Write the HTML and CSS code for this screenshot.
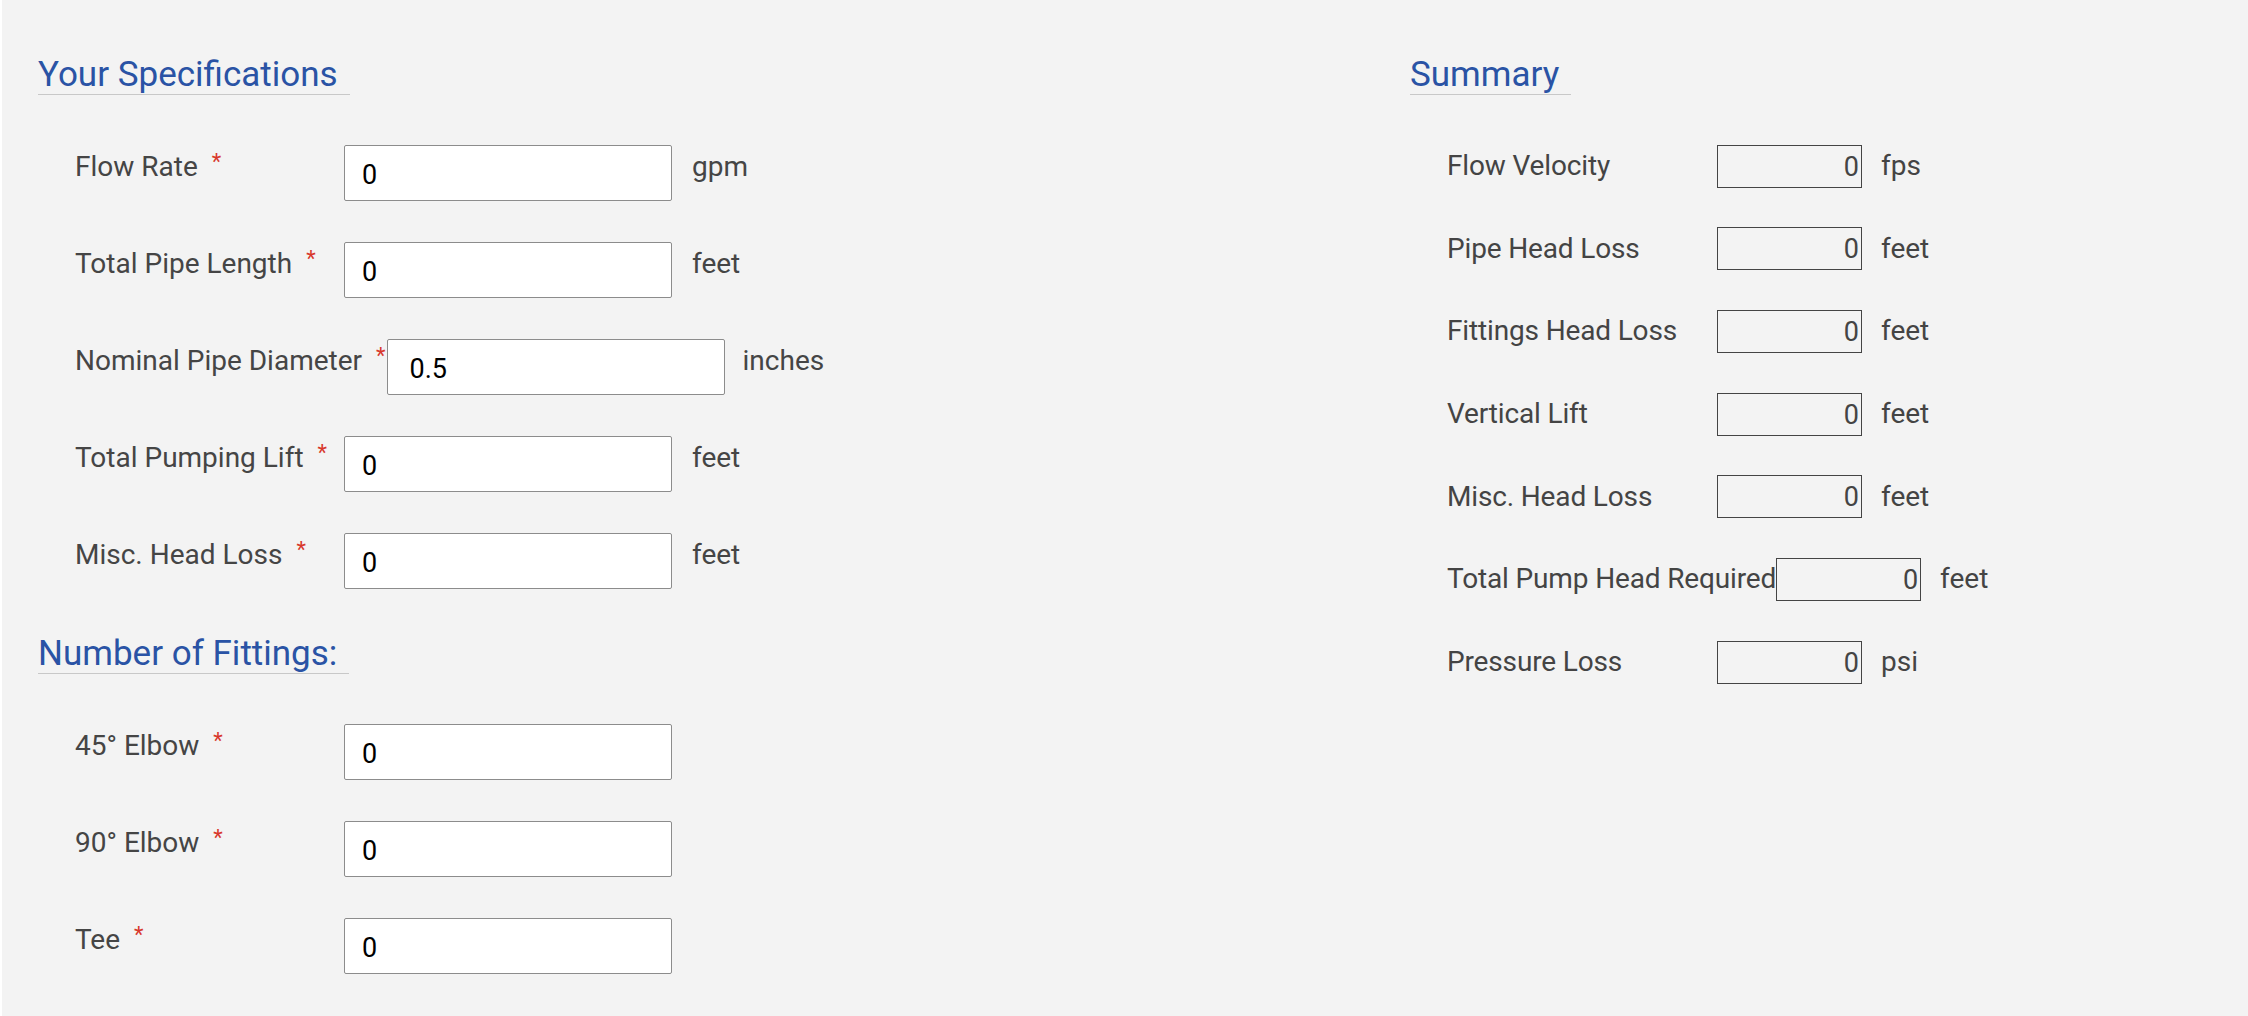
FILE: index.html
```html
<!DOCTYPE html>
<html lang="en">
<head>
<meta charset="utf-8">
<title>Pump Head Calculator</title>
<link rel="stylesheet" href="styles.css">
</head>
<body>
<div class="page">
  <section class="col col-left">
    <h2 class="sec-title">Your Specifications</h2>
    <div class="rows">
      <div class="row">
        <label class="lbl">Flow Rate<span class="req">*</span></label>
        <input class="inp" type="text" value="0">
        <span class="unit">gpm</span>
      </div>
      <div class="row">
        <label class="lbl">Total Pipe Length<span class="req">*</span></label>
        <input class="inp" type="text" value="0">
        <span class="unit">feet</span>
      </div>
      <div class="row">
        <label class="lbl">Nominal Pipe Diameter<span class="req">*</span></label>
        <input class="inp inp--wide" type="text" value="0.5">
        <span class="unit unit--tight">inches</span>
      </div>
      <div class="row">
        <label class="lbl">Total Pumping Lift<span class="req">*</span></label>
        <input class="inp" type="text" value="0">
        <span class="unit">feet</span>
      </div>
      <div class="row">
        <label class="lbl">Misc. Head Loss<span class="req">*</span></label>
        <input class="inp" type="text" value="0">
        <span class="unit">feet</span>
      </div>
    </div>

    <h2 class="sec-title sec-title--next">Number of Fittings:</h2>
    <div class="rows">
      <div class="row">
        <label class="lbl">45° Elbow<span class="req">*</span></label>
        <input class="inp" type="text" value="0">
      </div>
      <div class="row">
        <label class="lbl">90° Elbow<span class="req">*</span></label>
        <input class="inp" type="text" value="0">
      </div>
      <div class="row">
        <label class="lbl">Tee<span class="req">*</span></label>
        <input class="inp" type="text" value="0">
      </div>
    </div>
  </section>

  <section class="col col-right">
    <h2 class="sec-title">Summary</h2>
    <div class="sum-rows">
      <div class="sum-row">
        <span class="sum-lbl">Flow Velocity</span>
        <span class="out">0</span>
        <span class="sum-unit">fps</span>
      </div>
      <div class="sum-row">
        <span class="sum-lbl">Pipe Head Loss</span>
        <span class="out">0</span>
        <span class="sum-unit">feet</span>
      </div>
      <div class="sum-row">
        <span class="sum-lbl">Fittings Head Loss</span>
        <span class="out">0</span>
        <span class="sum-unit">feet</span>
      </div>
      <div class="sum-row">
        <span class="sum-lbl">Vertical Lift</span>
        <span class="out">0</span>
        <span class="sum-unit">feet</span>
      </div>
      <div class="sum-row">
        <span class="sum-lbl">Misc. Head Loss</span>
        <span class="out">0</span>
        <span class="sum-unit">feet</span>
      </div>
      <div class="sum-row">
        <span class="sum-lbl">Total Pump Head Required</span>
        <span class="out">0</span>
        <span class="sum-unit">feet</span>
      </div>
      <div class="sum-row">
        <span class="sum-lbl">Pressure Loss</span>
        <span class="out">0</span>
        <span class="sum-unit">psi</span>
      </div>
    </div>
  </section>
</div>
</body>
</html>
```

FILE: styles.css
```css
* {
  box-sizing: border-box;
}

html, body {
  margin: 0;
  padding: 0;
  background: #ffffff;
}

body {
  font-family: Roboto, "Liberation Sans", Arial, sans-serif;
  color: #444444;
}

.page {
  margin-left: 2px;
  min-height: 1016px;
  background: #f3f3f3;
  padding: 56.5px 0 0 36px;
  display: grid;
  grid-template-columns: 1372px 1fr;
  align-items: start;
}

.col {
  display: flex;
  flex-direction: column;
  align-items: flex-start;
}

.sec-title {
  margin: 0 0 50px 0;
  font-size: 35px;
  line-height: 35px;
  font-weight: 400;
  color: #2a53a5;
  padding: 0 12px 2px 0;
  border-bottom: 1px solid #c8c8c8;
}

.sec-title--next {
  margin-top: 47.5px;
}

.rows {
  display: flex;
  flex-direction: column;
  gap: 41px;
  padding-left: 37px;
}

.row {
  display: flex;
  align-items: flex-start;
}

.lbl {
  min-width: 269px;
  font-size: 28px;
  line-height: 40px;
  padding-top: 2px;
  color: #454545;
  white-space: nowrap;
}

.req {
  color: #d8382c;
  font-size: 22px;
  margin-left: 14px;
  margin-right: 1px;
  vertical-align: top;
  line-height: 30px;
}

.inp {
  width: 328px;
  height: 56px;
  margin: 0;
  padding: 4px 17px 0 17px;
  border: 1px solid #8c8c8c;
  border-radius: 2px;
  background: #ffffff;
  font-family: Roboto, "Liberation Sans", Arial, sans-serif;
  font-size: 27px;
  color: #000000;
  outline: none;
}

.inp--wide {
  width: 338px;
  padding-left: 22px;
}

.unit {
  margin-left: 20px;
  font-size: 28px;
  line-height: 40px;
  padding-top: 2px;
  color: #454545;
}

.unit--tight {
  margin-left: 18px;
}

.sum-rows {
  display: flex;
  flex-direction: column;
  gap: 39.7px;
  padding-left: 37px;
}

.sum-row {
  display: flex;
  align-items: center;
}

.sum-lbl {
  min-width: 270px;
  font-size: 28px;
  line-height: 40px;
  letter-spacing: -0.15px;
  color: #444444;
  white-space: nowrap;
}

.out {
  width: 145px;
  height: 43px;
  border: 1px solid #444444;
  padding: 2px 2px 0 0;
  text-align: right;
  font-size: 27px;
  line-height: 38px;
  color: #444444;
}

.sum-unit {
  margin-left: 19px;
  font-size: 28px;
  line-height: 40px;
  color: #444444;
}
```
